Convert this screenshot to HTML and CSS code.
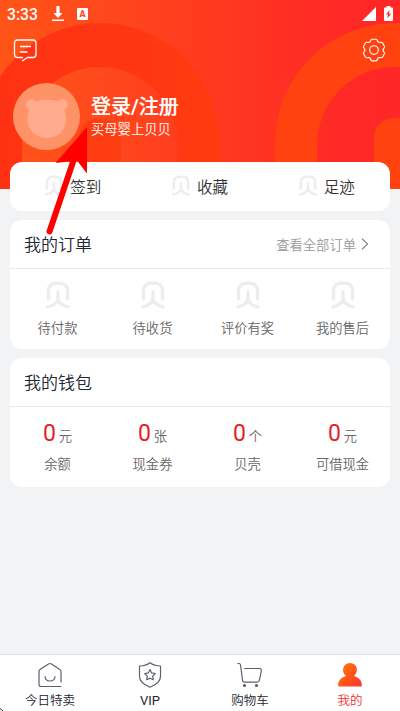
FILE: index.html
```html
<!DOCTYPE html>
<html lang="zh-CN">
<head>
<meta charset="utf-8">
<title>我的</title>
<link rel="stylesheet" href="styles.css">
</head>
<body>
<svg class="defs" width="0" height="0">
  <symbol id="bei" viewBox="0 0 24 28">
    <path d="M2.500 18V9.500C2.500 5 5.500 2.300 10 2.300h4c4.500 0 7.500 2.700 7.500 7.200V18M12 11v6c0 4-4.500 8.500-10 8.800M12 17c0 4 4.500 8.500 10 8.800" fill="none" stroke="#ededed" stroke-width="3.400" stroke-linecap="round"/>
  </symbol>
</svg>
<div class="screen">
  <header class="hero">
    <svg class="hero-bg" viewBox="0 0 400 189">
      <defs>
        <linearGradient id="bg"><stop offset="0" stop-color="#ff5518"/><stop offset=".2" stop-color="#ff4b1b"/><stop offset=".5" stop-color="#ff3b1e"/><stop offset=".85" stop-color="#ff2926"/><stop offset="1" stop-color="#ff2727"/></linearGradient>
        <linearGradient id="arch"><stop offset="0" stop-color="#ff3213"/><stop offset="1" stop-color="#ff3a10"/></linearGradient>
      </defs>
      <path fill="url(#bg)" d="M0 0h400v189H0z"/>
      <path fill="url(#arch)" fill-rule="evenodd" d="M-20 189v-46a120 120 0 0 1 240 0v46zM22 189v-44a78 78 0 0 1 156 0v44z"/>
      <path fill="#ff3d12" d="M79 189v-51a20 20 0 0 1 20-20h2a20 20 0 0 1 20 20v51z"/>
      <path fill="#ff420f" fill-rule="evenodd" d="M275 189v-46a120 120 0 0 1 240 0v46zM317 189v-44a78 78 0 0 1 156 0v44z"/>
      <path fill="#ff420f" d="M374 189v-51a20 20 0 0 1 20-20h6v71z"/>
    </svg>
    <div class="status">
      <span class="time">3:33</span>
      <svg class="download" width="12" height="16" viewBox="0 0 12 16"><path fill="#fff" d="M4.400 0h3.200v7h3L6 12 1.400 7h3zM0 13.500h12V15H0z"/></svg>
      <span class="badge">A</span>
      <svg class="signal" width="14" height="14" viewBox="0 0 14 14"><path fill="#fff" d="M14 0v14H0z"/></svg>
      <svg class="battery" width="9" height="15" viewBox="0 0 9 15"><path fill="#fff" d="M2.500 0h4v1.500H8q1 0 1 1V14q0 1-1 1H1q-1 0-1-1V2.500q0-1 1-1h1.500z"/><path fill="#ff2d26" d="M5.500 4 2 8.600h2L3.400 12.500 7 7.700H5z"/></svg>
    </div>
    <div class="tools">
      <svg width="24" height="24" viewBox="0 0 24 24" fill="none" stroke="#fff" stroke-width="1.300" stroke-linecap="round" stroke-linejoin="round"><path d="M9.500 22.700 14.500 19.500H20q3 0 3-3V5q0-3-3-3H4.500q-3 0-3 3v11.500q0 3 3 3h5M7.500 8.500h10M7.500 14h6.500"/></svg>
      <svg width="24" height="24" viewBox="0 0 24 24" fill="none" stroke="#fff" stroke-width="1.150" stroke-linejoin="round"><path d="M10 1.200h4q1 0 1.300 1.300.6 2.300 2.700 2 2-.6 2.600.5l1.800 3.200q.6 1-.5 1.900-1.700 1.900 0 3.800 1.100.9.500 1.900L20.600 19q-.6 1.100-2.600.5-2.100-.3-2.700 2-.3 1.300-1.300 1.300h-4q-1 0-1.300-1.300-.6-2.300-2.700-2-2 .6-2.600-.5l-1.800-3.200q-.6-1 .5-1.900 1.700-1.900 0-3.800-1.100-.9-.5-1.900L3.400 5q.6-1.100 2.600-.5 2.100.3 2.700-2Q9 1.200 10 1.200z"/><circle cx="12" cy="12" r="4.300"/></svg>
    </div>
    <div class="profile">
      <svg width="68" height="68" viewBox="0 0 68 68"><circle cx="33.500" cy="33.500" r="33.500" fill="#ff9368"/><g fill="#ffab8d"><circle cx="18" cy="21.500" r="5.300"/><circle cx="49.500" cy="21.500" r="5.300"/><path d="M19 20.500C25 15.500 42 15.500 48.500 20.500 51 25 53 30 53 36c0 11-8 19-19.200 19S14.500 47 14.500 36c0-6 2-11 4.500-15.500z"/></g></svg>
      <div><h1>登录/注册</h1><p>买母婴上贝贝</p></div>
    </div>
  </header>
  <main>
    <section class="card quick">
      <div><svg><use href="#bei"/></svg>签到</div>
      <div><svg><use href="#bei"/></svg>收藏</div>
      <div><svg><use href="#bei"/></svg>足迹</div>
    </section>
    <section class="card panel">
      <div class="head"><h2>我的订单</h2><span class="more">查看全部订单<svg width="8" height="12" viewBox="0 0 8 12"><path d="m1 .7 5.500 5.300L1 11.300" fill="none" stroke="#888" stroke-width="1.200"/></svg></span></div>
      <div class="cols orders">
        <div><svg><use href="#bei"/></svg>待付款</div>
        <div><svg><use href="#bei"/></svg>待收货</div>
        <div><svg><use href="#bei"/></svg>评价有奖</div>
        <div><svg><use href="#bei"/></svg>我的售后</div>
      </div>
    </section>
    <section class="card panel">
      <div class="head"><h2>我的钱包</h2></div>
      <div class="cols wallet">
        <div><p><b>0</b>元</p>余额</div>
        <div><p><b>0</b>张</p>现金券</div>
        <div><p><b>0</b>个</p>贝壳</div>
        <div><p><b>0</b>元</p>可借现金</div>
      </div>
    </section>
  </main>
  <nav>
    <div><svg width="26" height="26" viewBox="0 0 26 26" fill="none" stroke="#5b606b" stroke-width="1.200" stroke-linecap="round" stroke-linejoin="round"><path d="M24 24.500H4q-2 0-2-2V9.500Q2 8 3.300 7.200L11.500 2Q13 1 14.500 2l8 5.200Q24 8 24 9.500V20M8 14.500c.5 6 9.500 6 10 0"/></svg>今日特卖</div>
    <div class="vip"><svg width="26" height="26" viewBox="0 0 26 26" fill="none" stroke="#5b606b" stroke-width="1.200" stroke-linejoin="round"><path d="M13 .8Q17 4 23.500 4v10.500Q23.500 21 13 25.200 2.500 21 2.500 14.500V4Q9 4 13 .8zM13 7.600l1.700 3.300 3.600.6-2.600 2.600.5 3.700-3.200-1.600-3.200 1.600.5-3.700-2.600-2.600 3.600-.6z"/></svg>VIP</div>
    <div><svg width="26" height="26" viewBox="0 0 26 26" fill="none" stroke="#5b606b" stroke-width="1.200" stroke-linecap="round" stroke-linejoin="round"><path d="M.8 1.500H2q1.300 0 1.500 1.500l2 15q.2 2.200 2 2.200H20q2 0 2.400-2L24.300 9q.3-2.500-2-2.500H7.500"/><circle cx="7.500" cy="23.500" r="1" fill="#4b505b"/><circle cx="19.500" cy="23.500" r="1" fill="#4b505b"/></svg>购物车</div>
    <div class="active"><svg width="26" height="26" viewBox="0 0 26 26"><defs><linearGradient id="me" x2="1" y2="1"><stop stop-color="#ff7d00"/><stop offset="1" stop-color="#ff3030"/></linearGradient></defs><path fill="url(#me)" d="M13 1c7.500 0 9 9 4 13 5 1.500 7.800 5 7.800 9 0 1-.5 1.500-1.500 1.500H2.700c-1 0-1.500-.5-1.500-1.500 0-4 2.800-7.500 7.800-9C4 10 5.500 1 13 1z"/></svg>我的</div>
  </nav>
  <svg class="pointer" width="42" height="110" viewBox="0 0 42 110"><path d="M3.500 105.500 28 33" stroke="#f00" stroke-width="6" stroke-linecap="round"/><path fill="#f00" d="M41 1v46.500L31 34.500 9.500 37z"/></svg>
  <svg class="corner" width="4" height="4" viewBox="0 0 4 4"><path d="M0 1.500 3 4" stroke="#333"/></svg>
</div>
</body>
</html>
```
FILE: styles.css
```css
* { box-sizing: border-box; }
body { margin: 0; font-family: Roboto, "Noto Sans CJK SC", sans-serif; }
h1, h2, p { margin: 0; font-weight: inherit; }
svg { display: block; flex: none; }
.defs { position: absolute; }
.screen { position: relative; width: 400px; height: 711px; overflow: hidden; display: flex; flex-direction: column; background: #f2f3f5; font-weight: 350; }
.hero { position: relative; isolation: isolate; height: 189px; flex: none; color: #fff; }
.hero-bg { position: absolute; inset: 0; z-index: -1; width: 400px; height: 189px; }
.status { display: flex; align-items: center; height: 28px; padding: 0 7px; }
.time { font-size: 15.7px; font-weight: 500; width: 45px; }
.badge { width: 11px; height: 12px; margin-left: 13px; background: #fff; color: #ff4a1b; border-radius: 1px; font-size: 9px; line-height: 12px; font-weight: 900; text-align: center; }
.signal { margin-left: auto; margin-right: 8px; }
.battery { margin-bottom: 2px; }
.signal { margin-bottom: 1px; }
.tools { display: flex; justify-content: space-between; height: 54px; padding: 10px 14px 0 13px; }
.profile { display: flex; gap: 10px; padding: 1px 13px; }
.profile h1 { margin-top: 10px; font-size: 20px; line-height: 28px; font-weight: 500; -webkit-text-stroke: .2px #fff; }
.profile p { font-size: 13.3px; line-height: 18px; }
main { flex: 1; position: relative; display: flex; flex-direction: column; gap: 9px; margin-top: -27px; padding: 0 10px; }
.card { background: #fff; border-radius: 12px; }
.quick { display: grid; grid-template-columns: repeat(3, 1fr); height: 49px; padding-bottom: 2px; align-items: center; font-size: 15.5px; color: #333; }
.quick div { display: flex; justify-content: center; align-items: center; gap: 7px; }
.quick svg { width: 18px; height: 21px; }
.panel { height: 129px; }
.head { display: flex; justify-content: space-between; align-items: center; height: 49px; padding: 0 21px 0 14px; border-bottom: 1px solid #e8e8ea; }
.head h2 { font-size: 17px; color: #222533; line-height: 24px; padding-top: 2px; }
.more { display: flex; align-items: center; gap: 5px; font-size: 13.3px; color: #999; }
.cols { display: grid; grid-template-columns: repeat(4, 1fr); font-size: 13.3px; line-height: 20px; color: #666; text-align: center; }
.orders { padding-top: 12px; }
.orders svg { width: 24px; height: 28px; margin: 0 auto 10px; }
.wallet { padding-top: 11px; }
.wallet p { height: 37px; line-height: 32px; }
.wallet b { font-size: 23px; font-weight: 400; color: #e91c23; margin-right: 3px; }
nav { display: grid; grid-template-columns: repeat(4, 1fr); height: 57px; border-top: 1px solid #dfe0e3; background: #fff; padding-top: 7px; text-align: center; font-size: 12.5px; line-height: 20px; color: #22252e; }
nav svg { margin: 0 auto 3px; }
.vip { font-size: 13px; font-weight: 400; }
.active { color: #f5302f; }
.pointer { position: absolute; left: 46px; top: 126px; }
.corner { position: absolute; left: 0; bottom: 0; }
```
